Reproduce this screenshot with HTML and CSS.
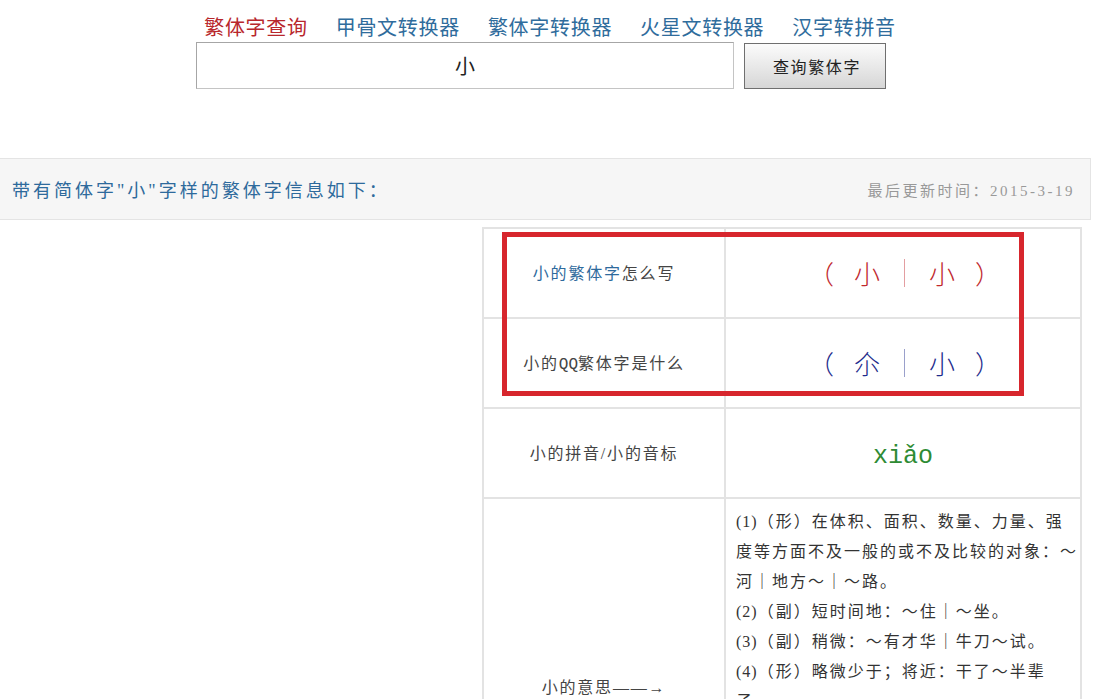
FILE: index.html
```html
<!DOCTYPE html>
<html lang="zh-CN">
<head>
<meta charset="utf-8">
<title>小的繁体字</title>
<link rel="stylesheet" href="styles.css">
</head>
<body>
<div class="top">
  <nav class="nav">
    <a class="nav-link current" href="#">繁体字查询</a>
    <a class="nav-link" href="#">甲骨文转换器</a>
    <a class="nav-link" href="#">繁体字转换器</a>
    <a class="nav-link" href="#">火星文转换器</a>
    <a class="nav-link" href="#">汉字转拼音</a>
  </nav>
  <form class="search">
    <input class="search-input" type="text" value="小">
    <button class="search-btn" type="button">查询繁体字</button>
  </form>
</div>

<div class="infobar">
  <span class="info-title">带有简体字"小"字样的繁体字信息如下：</span>
  <span class="info-date">最后更新时间：2015-3-19</span>
</div>

<div class="content">
  <div class="table-wrap">
    <table class="info-table">
      <tr>
        <td class="label"><span class="label-link">小的繁体字</span>怎么写</td>
        <td class="value">
          <span class="glyphs red"><span>（</span><span>小</span><span class="bar"></span><span>小</span><span>）</span></span>
        </td>
      </tr>
      <tr>
        <td class="label">小的<span class="ascii">QQ</span>繁体字是什么</td>
        <td class="value">
          <span class="glyphs navy"><span>（</span><span>尒</span><span class="bar"></span><span>小</span><span>）</span></span>
        </td>
      </tr>
      <tr>
        <td class="label">小的拼音/小的音标</td>
        <td class="value"><span class="pinyin">xiǎo</span></td>
      </tr>
      <tr>
        <td class="label">小的意思——→</td>
        <td class="meaning">
          <div class="meaning-text">
            <p><span class="ascii">(1)</span>（形）在体积、面积、数量、力量、强度等方面不及一般的或不及比较的对象：～河｜地方～｜～路。</p>
            <p><span class="ascii">(2)</span>（副）短时间地：～住｜～坐。</p>
            <p><span class="ascii">(3)</span>（副）稍微：～有才华｜牛刀～试。</p>
            <p><span class="ascii">(4)</span>（形）略微少于；将近：干了～半辈子。</p>
            <p><span class="ascii">(5)</span>（形）排行最末的：～儿子。</p>
            <p><span class="ascii">(6)</span>（名）年幼的人：一家老～。</p>
            <p><span class="ascii">(7)</span>（名）妾：娶～。</p>
            <p><span class="ascii">(8)</span>（名）谦辞，称自己或与自己有关的人或事物：～弟｜～店。</p>
          </div>
        </td>
      </tr>
    </table>
    <div class="highlight"></div>
  </div>
</div>
</body>
</html>
```

FILE: styles.css
```css
* { box-sizing: border-box; }

body {
  margin: 0;
  background: #fff;
  font-family: "Liberation Serif", "Noto Sans CJK SC", serif;
  color: #333;
}

.top {
  display: flex;
  flex-direction: column;
  align-items: center;
  padding-top: 16px;
}

.nav {
  display: flex;
  gap: 28px;
  font-size: 20px;
  line-height: 24px;
  letter-spacing: 0.7px;
  padding-left: 2px;
}

.nav-link {
  color: #2f6c9c;
  text-decoration: none;
}

.nav-link.current { color: #b8272c; }

.search {
  display: flex;
  align-items: flex-end;
  gap: 10px;
  margin: 2px 16px 0 0;
}

.search-input {
  width: 538px;
  height: 47px;
  border: 1px solid #c4c4c4;
  border-top-color: #a6a6a6;
  border-left-color: #a6a6a6;
  text-align: center;
  font-family: "Noto Sans CJK SC", sans-serif;
  font-size: 20px;
  color: #222;
  padding: 0;
}

.search-btn {
  width: 142px;
  height: 46px;
  border: 1px solid #6f6f6f;
  background: linear-gradient(#fbfbfb, #e9e9e9 50%, #d6d6d6);
  font-family: "Noto Sans CJK SC", sans-serif;
  font-size: 16px;
  letter-spacing: 1.6px;
  color: #222;
  padding: 0 0 0 4px;
}

.infobar {
  margin-top: 69px;
  width: 1091px;
  height: 62px;
  background: #f6f6f6;
  border: 1px solid #e4e4e4;
  border-left: none;
  display: flex;
  align-items: center;
  justify-content: space-between;
  padding: 0 15px 0 12px;
}

.info-title {
  color: #2e6a9c;
  font-size: 18px;
  letter-spacing: 3px;
}

.info-date {
  color: #999;
  font-size: 15px;
  letter-spacing: 2.5px;
}

.content {
  margin-top: 7px;
  padding-left: 482px;
}

.table-wrap {
  position: relative;
  width: 600px;
}

.info-table {
  width: 600px;
  border-collapse: collapse;
  table-layout: fixed;
}

.info-table td {
  border: 2px solid #e3e3e3;
  height: 90px;
  padding: 0;
  vertical-align: middle;
}

.label {
  width: 242px;
  text-align: center;
  font-size: 16px;
  letter-spacing: 1.8px;
  color: #444;
}

.info-table td.label { padding-bottom: 3px; }

.label-link { color: #2e6a9c; }

.ascii { font-family: "Liberation Mono", monospace; letter-spacing: 0; }

.value { text-align: center; }

.glyphs {
  display: inline-flex;
  align-items: center;
  gap: 20px;
  font-family: "Noto Sans CJK SC", sans-serif;
  font-size: 26px;
  line-height: 32px;
  font-weight: 300;
  padding-left: 3px;
}

.glyphs.red { color: #c0282e; }
.glyphs.navy { color: #1e2c8c; }

.bar {
  width: 1px;
  height: 28px;
  margin: 0 4px;
  background: currentColor;
  opacity: 0.45;
}

.pinyin {
  font-family: "Liberation Mono", monospace;
  font-size: 25px;
  color: #2e8b34;
  position: relative;
  top: 3px;
}

.meaning {
  vertical-align: top;
}

.info-table td.meaning {
  padding: 8px 0 8px 10px;
}

.meaning-text {
  width: 345px;
  font-size: 16px;
  letter-spacing: 2px;
  line-height: 30px;
  color: #333;
}

.meaning-text .ascii {
  font-family: "Liberation Serif", serif;
  letter-spacing: 1px;
}

.meaning-text p { margin: 0; }

.highlight {
  position: absolute;
  left: 20px;
  top: 5px;
  width: 522px;
  height: 164px;
  border: 5px solid #d7262d;
  pointer-events: none;
}
```
